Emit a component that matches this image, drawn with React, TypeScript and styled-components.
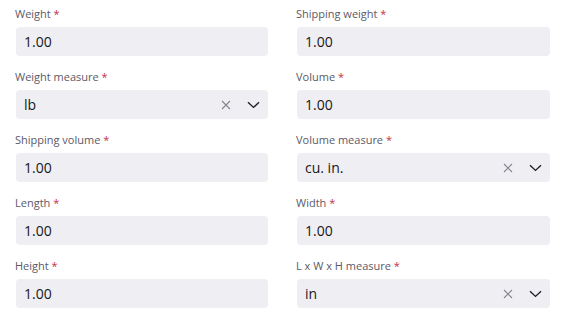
import React from "react";
import styled, { createGlobalStyle } from "styled-components";

type Field = {
  label: string;
  value: string;
  select?: boolean;
};

const fields: Field[] = [
  { label: "Weight", value: "1.00" },
  { label: "Shipping weight", value: "1.00" },
  { label: "Weight measure", value: "lb", select: true },
  { label: "Volume", value: "1.00" },
  { label: "Shipping volume", value: "1.00" },
  { label: "Volume measure", value: "cu. in.", select: true },
  { label: "Length", value: "1.00" },
  { label: "Width", value: "1.00" },
  { label: "Height", value: "1.00" },
  { label: "L x W x H measure", value: "in", select: true },
];

const App = () => {
  return (
    <>
      <GlobalStyle />
      <Form>
        {fields.map((f) => (
          <FieldBox key={f.label}>
            <Label>
              {f.label} <Required>*</Required>
            </Label>
            <Control>
              <Value>{f.value}</Value>
              {f.select && (
                <Actions>
                  <IconButton>
                    <svg width="10" height="10" viewBox="0 0 10 10">
                      <path d="M1 1L9 9M9 1L1 9" stroke="#85858f" strokeWidth="1.1" fill="none" />
                    </svg>
                  </IconButton>
                  <IconButton>
                    <svg width="13" height="8" viewBox="0 0 13 8">
                      <path d="M1 1.2L6.5 6.4L12 1.2" stroke="#1f1f28" strokeWidth="1.4" fill="none" />
                    </svg>
                  </IconButton>
                </Actions>
              )}
            </Control>
          </FieldBox>
        ))}
      </Form>
    </>
  );
};

export default App;

const GlobalStyle = createGlobalStyle`
  body {
    margin: 0;
    background: #ffffff;
    font-family: "Open Sans", "Noto Sans", sans-serif;
  }
`;

const Form = styled.div`
  display: grid;
  grid-template-columns: 252px 253px;
  column-gap: 29px;
  row-gap: 13px;
  padding: 6px 0 0 16px;
`;

const FieldBox = styled.div`
  display: flex;
  flex-direction: column;
  gap: 5px;
`;

const Label = styled.div`
  font-size: 11px;
  line-height: 16px;
  color: #5b5967;
  margin-left: -1px;
`;

const Required = styled.span`
  color: #c4314b;
`;

const Control = styled.div`
  display: flex;
  align-items: center;
  height: 29px;
  background: #efeff3;
  border-radius: 4px;
  padding: 0 8px;
  box-sizing: border-box;
`;

const Value = styled.div`
  flex: 1;
  font-size: 14px;
  color: #16161c;
`;

const Actions = styled.div`
  display: flex;
  align-items: center;
  gap: 16px;
`;

const IconButton = styled.span`
  display: flex;
  align-items: center;
  justify-content: center;
`;
